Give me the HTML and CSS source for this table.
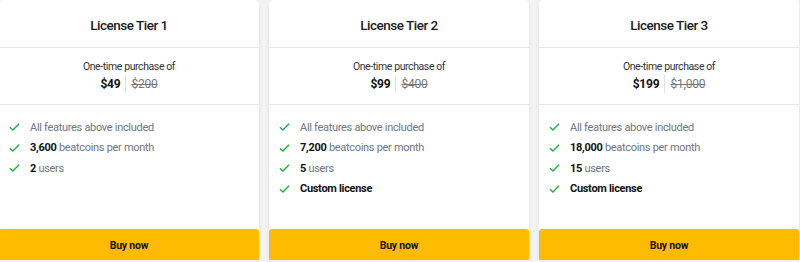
FILE: index.html
```html
<!DOCTYPE html>
<html lang="en">
<head>
    <meta charset="UTF-8">
    <meta name="viewport" content="width=device-width, initial-scale=1.0">
    <title>License Tiers</title>
    <link rel="stylesheet" href="styles.css">
</head>
<body>
    <div class="tiers">
        <!-- Tier 1 -->
        <div class="tier-card">
            <div class="tier-head">License Tier 1</div>
            <div class="tier-price">
                <div class="price-label">One-time purchase of</div>
                <div class="price-row">
                    <span class="price-now">$49</span>
                    <span class="price-old">$200</span>
                </div>
            </div>
            <ul class="features">
                <li><svg class="check" viewBox="0 0 12 10"><path d="M1 5.2 L4.3 8.3 L11 1.5"/></svg><span>All features above included</span></li>
                <li><svg class="check" viewBox="0 0 12 10"><path d="M1 5.2 L4.3 8.3 L11 1.5"/></svg><span><b>3,600</b> beatcoins per month</span></li>
                <li><svg class="check" viewBox="0 0 12 10"><path d="M1 5.2 L4.3 8.3 L11 1.5"/></svg><span><b>2</b> users</span></li>
            </ul>
            <button class="buy-btn">Buy now</button>
        </div>

        <!-- Tier 2 -->
        <div class="tier-card">
            <div class="tier-head">License Tier 2</div>
            <div class="tier-price">
                <div class="price-label">One-time purchase of</div>
                <div class="price-row">
                    <span class="price-now">$99</span>
                    <span class="price-old">$400</span>
                </div>
            </div>
            <ul class="features">
                <li><svg class="check" viewBox="0 0 12 10"><path d="M1 5.2 L4.3 8.3 L11 1.5"/></svg><span>All features above included</span></li>
                <li><svg class="check" viewBox="0 0 12 10"><path d="M1 5.2 L4.3 8.3 L11 1.5"/></svg><span><b>7,200</b> beatcoins per month</span></li>
                <li><svg class="check" viewBox="0 0 12 10"><path d="M1 5.2 L4.3 8.3 L11 1.5"/></svg><span><b>5</b> users</span></li>
                <li><svg class="check" viewBox="0 0 12 10"><path d="M1 5.2 L4.3 8.3 L11 1.5"/></svg><span><b>Custom license</b></span></li>
            </ul>
            <button class="buy-btn">Buy now</button>
        </div>

        <!-- Tier 3 -->
        <div class="tier-card">
            <div class="tier-head">License Tier 3</div>
            <div class="tier-price">
                <div class="price-label">One-time purchase of</div>
                <div class="price-row">
                    <span class="price-now">$199</span>
                    <span class="price-old">$1,000</span>
                </div>
            </div>
            <ul class="features">
                <li><svg class="check" viewBox="0 0 12 10"><path d="M1 5.2 L4.3 8.3 L11 1.5"/></svg><span>All features above included</span></li>
                <li><svg class="check" viewBox="0 0 12 10"><path d="M1 5.2 L4.3 8.3 L11 1.5"/></svg><span><b>18,000</b> beatcoins per month</span></li>
                <li><svg class="check" viewBox="0 0 12 10"><path d="M1 5.2 L4.3 8.3 L11 1.5"/></svg><span><b>15</b> users</span></li>
                <li><svg class="check" viewBox="0 0 12 10"><path d="M1 5.2 L4.3 8.3 L11 1.5"/></svg><span><b>Custom license</b></span></li>
            </ul>
            <button class="buy-btn">Buy now</button>
        </div>
    </div>
</body>
</html>
```

FILE: styles.css
```css
/* base */
body {
    font-family: Roboto, "Liberation Sans", sans-serif;
    background-color: #f4f4f4;
    margin: 0;
    overflow: hidden;
}

/* cards row */
.tiers {
    display: flex;
    gap: 10px;
    margin-left: -1px;
}

.tier-card {
    width: 260px;
    height: 260px;
    flex-shrink: 0;
    display: flex;
    flex-direction: column;
    background: white;
    border-radius: 4px;
    box-shadow: 0 1px 6px rgba(0,0,0,0.08);
}

.tier-head {
    height: 44px;
    padding-top: 3px;
    display: flex;
    align-items: center;
    justify-content: center;
    font-size: 13.5px;
    font-weight: 500;
    letter-spacing: -0.5px;
    color: #1d1d1d;
    border-bottom: 1px solid #e8e8e8;
}

.tier-price {
    height: 56px;
    display: flex;
    flex-direction: column;
    align-items: center;
    justify-content: center;
    border-bottom: 1px solid #e8e8e8;
}

.price-label {
    font-size: 10.5px;
    letter-spacing: -0.4px;
    color: #333;
    line-height: 14px;
}

.price-row {
    display: flex;
    align-items: center;
    margin-top: 1px;
    font-size: 12px;
    letter-spacing: -0.2px;
    line-height: 18px;
}

.price-now {
    font-weight: 700;
    color: #111;
    padding-right: 5px;
    border-right: 1px solid #e2e2e2;
}

.price-old {
    color: #777;
    text-decoration: line-through;
    padding-left: 5px;
}

/* features */
.features {
    list-style: none;
    margin: 0;
    padding: 12px 0 0 10px;
    flex: 1;
}

.features li {
    display: flex;
    align-items: center;
    height: 20.5px;
    font-size: 11px;
    letter-spacing: -0.3px;
    color: #6f7780;
}

.features b {
    color: #111;
    font-weight: 700;
}

.check {
    width: 11px;
    height: 10px;
    margin-right: 10px;
    fill: none;
    stroke: #23b04a;
    stroke-width: 1.6;
}

.buy-btn {
    height: 32px;
    margin-bottom: -1px;
    border: none;
    border-radius: 3px;
    background: #ffbb00;
    color: #111;
    font-family: inherit;
    font-size: 10.5px;
    letter-spacing: -0.2px;
    font-weight: 700;
    cursor: pointer;
}
```
